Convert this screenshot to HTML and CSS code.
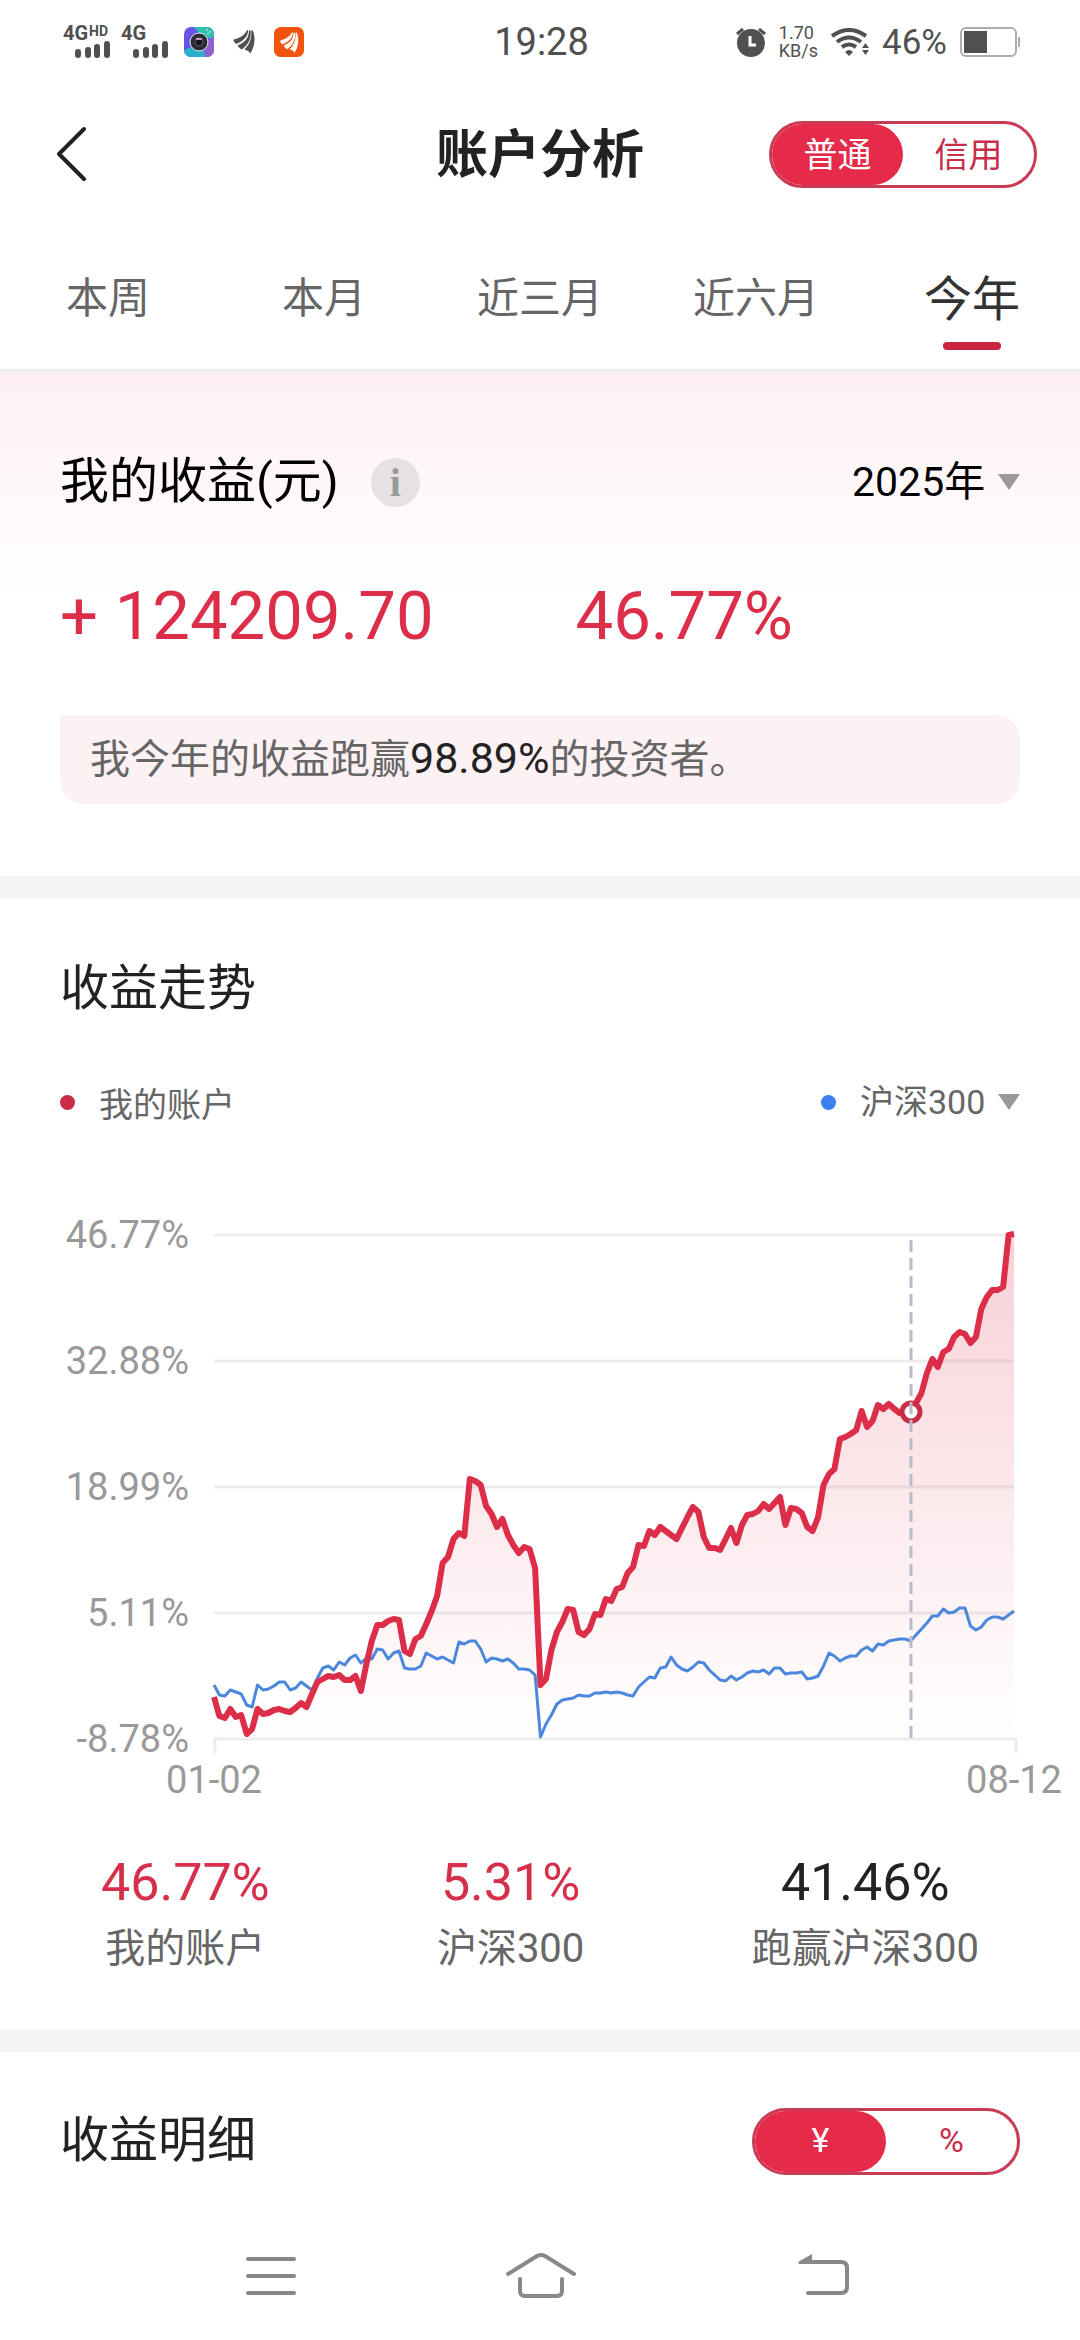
FILE: index.html
```html
<!DOCTYPE html>
<html lang="zh-CN">
<head>
  <meta charset="UTF-8">
  <meta name="viewport" content="width=device-width, initial-scale=1">
  <title>账户分析</title>
  <link rel="stylesheet" href="styles.css">
</head>
<body>

  <div class="statusbar">
    <div class="status-left">
      <svg width="50" height="50" viewBox="0 -8 50 50" fill="#505050">
        <text class="net" x="0" y="15">4G</text>
        <text class="net-hd" x="26" y="11">HD</text>
        <rect x="12" y="24" width="6" height="9" rx="3"/>
        <rect x="22" y="22" width="6" height="11" rx="3"/>
        <rect x="31" y="19" width="6" height="14" rx="3"/>
        <rect x="41" y="16" width="6" height="17" rx="3"/>
      </svg>
      <svg width="50" height="50" viewBox="0 -8 50 50" fill="#505050">
        <text class="net" x="0" y="15">4G</text>
        <rect x="12" y="24" width="6" height="9" rx="3"/>
        <rect x="22" y="22" width="6" height="11" rx="3"/>
        <rect x="31" y="19" width="6" height="14" rx="3"/>
        <rect x="41" y="16" width="6" height="17" rx="3"/>
      </svg>
      <svg class="app-icon" width="30" height="30" viewBox="0 0 30 30">
        <defs><clipPath id="cam"><rect width="30" height="30" rx="7"/></clipPath></defs>
        <g clip-path="url(#cam)">
          <rect width="30" height="30" fill="#6654e4"/>
          <path d="M10 0h20v12L18 10z" fill="#2fbfae"/>
          <path d="M30 9v21H20l-4-10z" fill="#8d62cf"/>
          <path d="M0 23l8-3 12 4 1 6H0z" fill="#27b1c8"/>
        </g>
        <circle cx="15" cy="15" r="9" fill="#2b2b33" stroke="#e8e8f4"/>
        <circle cx="15" cy="15" r="5" fill="#414150"/>
        <circle cx="15" cy="15" r="3" fill="#15151c"/>
        <path d="M12 12h6" stroke="#c58fb8" stroke-width="2"/>
        <path d="M22 3h2M25 5h2M23 7h2" stroke="#d9fff4" stroke-width="1"/>
      </svg>
      <svg class="feather" width="22" height="24" viewBox="0 0 66 74" fill="#505050">
        <path d="M0 30C20 25 36 16 42 1L46 0C46 20 30 36 8 43Q2 38 0 30z"/>
        <path d="M13 47C36 38 49 22 48 2L53 1C57 26 46 47 26 60Q17 56 13 47z"/>
        <path d="M34 60C50 46 58 24 55 2L60 1C69 24 67 50 52 73Q50 64 34 60z"/>
      </svg>
      <svg width="30" height="30" viewBox="0 0 90 90" fill="#fff">
        <rect width="90" height="90" rx="20" fill="#f0540f"/>
        <g transform="translate(18 16) scale(.84)">
          <path d="M0 30C20 25 36 16 42 1L46 0C46 20 30 36 8 43Q2 38 0 30z"/>
          <path d="M13 47C36 38 49 22 48 2L53 1C57 26 46 47 26 60Q17 56 13 47z"/>
          <path d="M34 60C50 46 58 24 55 2L60 1C69 24 67 50 52 73Q50 64 34 60z"/>
        </g>
      </svg>
    </div>
    <div class="clock">19:28</div>
    <div class="status-right">
      <svg width="30" height="30" viewBox="0 0 30 30">
        <circle cx="15" cy="16" r="14" fill="#505050"/>
        <path d="M1 7l6-5M29 7l-6-5" stroke="#505050" stroke-width="3"/>
        <path d="M14 9v9h6" fill="none" stroke="#fff" stroke-width="3"/>
      </svg>
      <div class="speed"><span>1.70</span><span>KB/s</span></div>
      <svg class="wifi" width="38" height="28" viewBox="0 0 38 28" fill="none" stroke="#505050" stroke-width="4">
        <path d="M1 8Q18-4 35 8"/>
        <path d="M6 14Q18 5 30 14"/>
        <path d="M11 19Q18 14 25 19"/>
        <path d="M14 24Q18 20 22 24L18 28z" fill="#505050" stroke="none"/>
        <path d="M31 20l3.500-5 3.500 5zM31 22l3.500 5 3.500-5z" fill="#505050" stroke="none"/>
      </svg>
      <div class="percent">46%</div>
      <svg width="60" height="30" viewBox="0 0 60 30">
        <rect x="1" y="1" width="55" height="28" rx="5" fill="none" stroke="#adadad" stroke-width="2"/>
        <rect x="4" y="4" width="23" height="22" fill="#505050"/>
        <path d="M59 10v10" stroke="#adadad" stroke-width="2"/>
      </svg>
    </div>
  </div>

  <header class="header">
    <button class="back" aria-label="返回">
      <svg width="30" height="56" viewBox="0 0 30 56" fill="none" stroke="#222" stroke-width="4" stroke-linecap="round" stroke-linejoin="round">
        <path d="M28 3L3 28l25 25"/>
      </svg>
    </button>
    <h1>账户分析</h1>
    <div class="toggle">
      <button class="on">普通</button>
      <button>信用</button>
    </div>
  </header>

  <nav class="tabs">
    <button>本周</button>
    <button>本月</button>
    <button>近三月</button>
    <button>近六月</button>
    <button class="active">今年</button>
  </nav>

  <section class="profit">
    <div class="row">
      <h2>我的收益(元)</h2>
      <button class="info" aria-label="说明">i</button>
      <label class="picker year">
        <select aria-label="年份"><option>2025年</option></select>
        <span class="arrow"></span>
      </label>
    </div>
    <div class="figures">
      <span class="amount">+ 124209.70</span>
      <span>46.77%</span>
    </div>
    <p class="note">我今年的收益跑赢<b>98.89%</b>的投资者。</p>
  </section>

  <section class="trend">
    <h2>收益走势</h2>
    <div class="legend">
      <span class="dot red"></span>
      <span>我的账户</span>
      <span class="dot blue"></span>
      <label class="picker">
        <select aria-label="对比指数"><option>沪深300</option></select>
        <span class="arrow"></span>
      </label>
    </div>

    <svg class="chart" viewBox="0 0 1080 620">
      <defs>
        <linearGradient id="fade" x1="0" y1="0" x2="0" y2="504" gradientUnits="userSpaceOnUse">
          <stop offset="0" stop-color="#e02d48" stop-opacity=".22"/>
          <stop offset="1" stop-color="#e02d48" stop-opacity="0"/>
        </linearGradient>
      </defs>
      <g class="y-labels">
        <text x="189" y="48">46.77%</text>
        <text x="189" y="174">32.88%</text>
        <text x="189" y="300">18.99%</text>
        <text x="189" y="426">5.11%</text>
        <text x="189" y="552">-8.78%</text>
      </g>
      <g class="x-labels">
        <text x="214" y="593">01-02</text>
        <text x="1014" y="593">08-12</text>
      </g>
      <g transform="translate(214 35)">
        <path id="area" fill="url(#fade)"/>
        <path class="grid" d="M0 0H800M0 126H800M0 252H800M0 378H800M-1 504H803M1 504V518M802 504V518"/>
        <path id="index" class="line-index"/>
        <path id="account" class="line-account"/>
        <circle class="marker" cx="697" cy="177" r="9"/>
        <path class="cursor" d="M697 5V503"/>
      </g>
    </svg>

    <div class="stats">
      <div><strong class="up">46.77%</strong><span>我的账户</span></div>
      <div><strong class="up">5.31%</strong><span>沪深300</span></div>
      <div><strong>41.46%</strong><span>跑赢沪深300</span></div>
    </div>
  </section>

  <section class="detail">
    <h2>收益明细</h2>
    <div class="toggle">
      <button class="on">¥</button>
      <button>%</button>
    </div>
  </section>

  <nav class="navbar">
    <button aria-label="菜单">
      <svg width="80" height="48" viewBox="0 0 80 48" stroke="#888" stroke-width="4" stroke-linecap="round">
        <path d="M18 7h46M18 24h46M18 41h46"/>
      </svg>
    </button>
    <button aria-label="主页">
      <svg width="80" height="48" viewBox="0 0 80 48" fill="none" stroke="#888" stroke-width="4" stroke-linecap="round" stroke-linejoin="round">
        <path d="M8 22L37 4q4-2 8 0l29 18M20 27v12q0 5 5 5h32q5 0 5-5V27"/>
      </svg>
    </button>
    <button aria-label="后退">
      <svg width="80" height="48" viewBox="0 0 80 48" fill="none" stroke="#888" stroke-width="4" stroke-linecap="round">
        <path d="M32 10h39q6 0 6 6v19q0 6-6 6H38"/>
        <path d="M28 10L42 2v10H29z" fill="#888" stroke="none"/>
      </svg>
    </button>
  </nav>

<script src="chart.js"></script>
</body>
</html>
```
FILE: styles.css
```css
*{
  box-sizing: border-box;
}

body{
  margin: 0;
  background-color: #ffffff;
  color: #222222;
  font-family: Roboto, "Noto Sans CJK SC", sans-serif;
}

h1, h2, p{
  margin: 0;
}

h2{
  font-size: 49px;
  font-weight: 400;
  line-height: 60px;
}

button, select{
  margin: 0;
  padding: 0;
  border: 0;
  background: none;
  color: inherit;
  font: inherit;
}

svg{
  display: block;
}

/* status bar */
.statusbar{
  display: grid;
  grid-template-columns: 1fr auto 1fr;
  align-items: center;
  height: 84px;
  padding: 0 60px 0 63px;
  color: #505050;
}

.status-left, .status-right{
  display: flex;
  align-items: center;
}

.status-left{
  gap: 8px;
}

.status-right{
  justify-content: flex-end;
  gap: 13px;
}

.net{
  font-size: 20px;
  font-weight: 700;
}

.net-hd{
  font-size: 14px;
  font-weight: 700;
}

.app-icon{
  margin-left: 5px;
}

.feather{
  margin: 0 11px;
}

.clock{
  font-size: 38px;
}

.speed{
  display: flex;
  flex-direction: column;
  font-size: 18px;
  line-height: 18px;
}

.percent{
  font-size: 35px;
}

/* header */
.header{
  display: grid;
  grid-template-columns: 1fr auto 1fr;
  align-items: center;
  height: 140px;
  padding: 0 43px;
}

.header .back{
  justify-self: start;
  margin-left: 13px;
}

.header h1{
  padding-top: 4px;
  font-size: 52px;
  line-height: 64px;
}

.header .toggle{
  justify-self: end;
}

.toggle{
  display: flex;
  width: 268px;
  height: 67px;
  border: 3px solid #c93a55;
  border-radius: 34px;
  overflow: hidden;
  font-size: 34px;
  color: #c92d49;
}

.toggle button{
  flex: 1;
  padding-bottom: 3px;
}

.toggle .on{
  background-color: #e62a49;
  border-radius: 0 34px 34px 0;
  color: #ffffff;
}

/* tabs */
.tabs{
  display: grid;
  grid-template-columns: repeat(5, 1fr);
  height: 148px;
  border-bottom: 3px solid #eeeeee;
  font-size: 42px;
  color: #666666;
}

.tabs button{
  position: relative;
  padding-bottom: 4px;
}

.tabs .active{
  font-size: 48px;
  color: #333333;
}

.tabs .active::after{
  content: "";
  position: absolute;
  left: 50%;
  bottom: 19px;
  width: 58px;
  height: 8px;
  margin-left: -29px;
  border-radius: 4px;
  background-color: #c9253f;
}

/* profit */
.profit{
  padding: 80px 60px 72px;
  background: linear-gradient(#fef0f2, #ffffff 230px);
  border-bottom: 23px solid #f5f5f5;
}

.row{
  display: flex;
  align-items: center;
  color: #000000;
}

.info{
  width: 49px;
  height: 49px;
  margin-left: 32px;
  border-radius: 50%;
  background-color: #e6e2e3;
  color: #999999;
  font-family: "Liberation Serif", serif;
  font-size: 40px;
  font-weight: 700;
  line-height: 49px;
}

.picker{
  display: flex;
  align-items: center;
  gap: 12px;
  margin-left: auto;
}

.picker select{
  appearance: none;
}

.year{
  font-size: 41px;
}

.arrow{
  border: 11px solid transparent;
  border-top: 16px solid #999999;
  border-bottom: 0;
}

.figures{
  display: flex;
  gap: 142px;
  margin-top: 64px;
  font-size: 67px;
  line-height: 80px;
  color: #dc2d49;
}

.note{
  margin-top: 59px;
  padding: 0 30px;
  border-radius: 0 24px 24px 24px;
  background-color: #fcf1f3;
  font-size: 40px;
  line-height: 89px;
  color: #666666;
}

.note b{
  font-size: 43px;
  font-weight: 400;
  line-height: 60px;
  color: #222222;
}

/* trend */
.trend{
  border-bottom: 23px solid #f5f5f5;
}

.trend h2{
  padding: 60px 60px 0;
}

.legend{
  display: flex;
  align-items: center;
  height: 50px;
  margin-top: 58px;
  padding: 0 60px;
  font-size: 34px;
  color: #666666;
}

.legend .picker{
  margin-left: 0;
}

.dot{
  width: 15px;
  height: 15px;
  margin-right: 24px;
  border-radius: 50%;
}

.red{
  background-color: #cb2a44;
}

.blue{
  margin-left: auto;
  background-color: #3a7ff0;
}

.chart{
  width: 100%;
  margin-top: 73px;
}

.y-labels, .x-labels{
  font-size: 38px;
  fill: #999999;
}

.y-labels{
  text-anchor: end;
}

.x-labels{
  text-anchor: middle;
}

.grid{
  fill: none;
  stroke: #000000;
  stroke-opacity: 0.07;
  stroke-width: 3px;
}

.line-index{
  fill: none;
  stroke: #4a87dd;
  stroke-width: 3px;
  stroke-linejoin: round;
}

.line-account{
  fill: none;
  stroke: #dc2d49;
  stroke-width: 6px;
  stroke-linejoin: round;
}

.marker{
  fill: #ffffff;
  stroke: #c92d45;
  stroke-width: 5px;
}

.cursor{
  stroke: #b9bcc7;
  stroke-width: 3px;
  stroke-dasharray: 12 6;
}

.stats{
  display: flex;
  justify-content: space-between;
  margin-top: 28px;
  padding: 0 101px 49px;
  text-align: center;
}

.stats strong, .stats span{
  display: block;
}

.stats strong{
  font-size: 52px;
  font-weight: 400;
  line-height: 70px;
}

.stats span{
  font-size: 40px;
  line-height: 62px;
  color: #666666;
}

.stats .up{
  color: #d62f4b;
}

/* detail */
.detail{
  display: flex;
  align-items: center;
  justify-content: space-between;
  height: 178px;
  padding: 0 60px;
}

/* system nav */
.navbar{
  display: flex;
  justify-content: center;
  gap: 190px;
  padding: 22px 0 40px;
}
```
FILE: chart.js
```js
// distance of each trading day from the top grid line
const account=[
  462,481,483,474,482,480,499,494,474,479,478,475,474,476,477,473,468,472,459,447,
  444,441,442,440,445,445,441,456,429,406,390,390,386,384,385,416,419,404,401,389,
  376,361,328,322,304,298,301,244,246,250,271,279,292,284,300,310,318,312,314,333,
  450,444,415,397,387,374,375,397,400,394,379,380,364,366,354,352,338,332,310,311,
  296,300,292,296,300,304,293,282,272,277,302,313,313,315,304,293,308,290,280,279,
  276,269,274,268,262,290,273,274,278,292,296,282,250,239,234,204,202,199,195,176,
  192,186,170,174,169,174,178,178,177,168,158,138,124,132,117,114,102,97,99,108,
  102,74,62,55,55,52,0,-1
];
const index300=[
  450,460,461,455,457,459,470,472,450,455,454,451,447,447,455,453,447,451,455,443,
  433,431,435,427,430,423,420,428,423,424,414,415,424,418,416,433,434,434,431,418,
  421,424,422,425,428,407,409,406,406,414,427,423,424,426,424,428,434,434,435,440,
  502,489,480,469,465,464,463,460,461,461,458,458,457,458,457,458,460,461,452,447,
  442,443,433,432,422,430,434,436,432,427,428,435,440,445,446,441,445,442,438,436,
  437,435,439,433,433,439,438,438,437,444,443,441,431,418,421,426,423,421,421,415,
  412,416,409,410,406,405,404,404,406,400,394,388,381,381,374,378,377,373,373,391,
  395,392,385,382,382,384,380,376
];
const width=800;
const height=504;

function line(values){
  const step=width/(values.length-1);
  return 'M'+values.map((y,i)=>`${(i*step).toFixed(1)} ${y}`).join('L');
}

document.querySelector('#account').setAttribute('d',line(account));
document.querySelector('#index').setAttribute('d',line(index300));
document.querySelector('#area').setAttribute('d',`${line(account)}V${height}H0Z`);
```
